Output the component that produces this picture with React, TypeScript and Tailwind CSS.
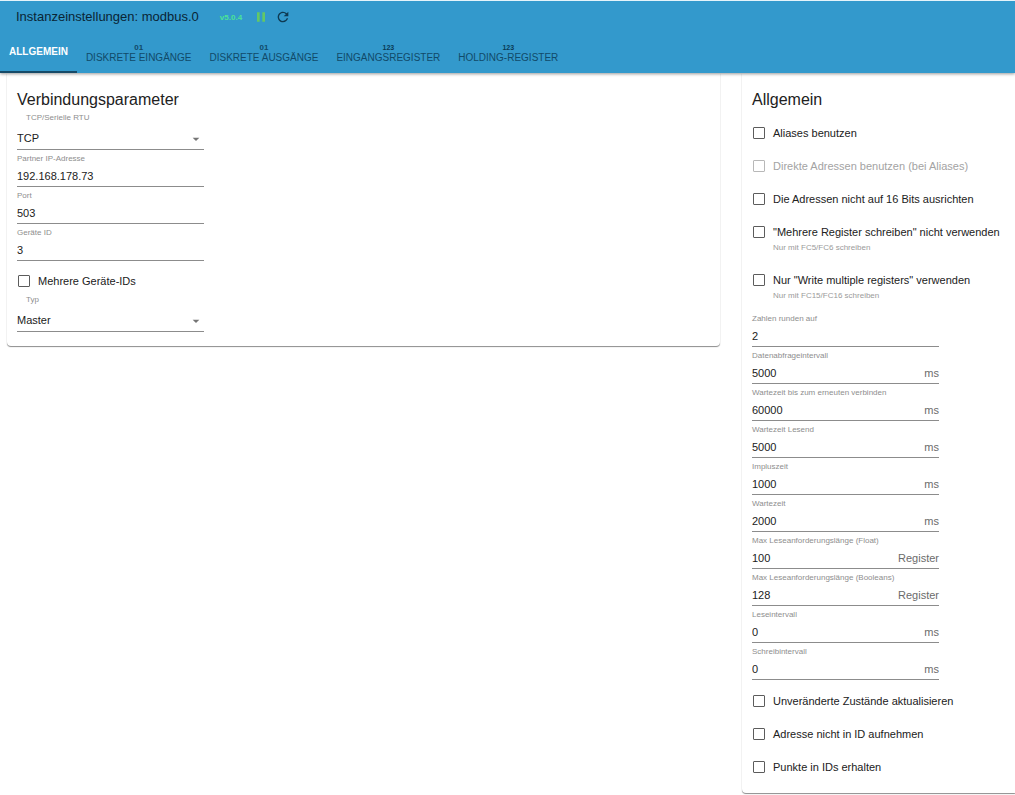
import { useId, useState } from "react";
import { MdArrowDropDown, MdPause, MdRefresh } from "react-icons/md";

const TABS = [
  { label: "Allgemein" },
  { label: "Diskrete Eingänge", icon: "01" },
  { label: "Diskrete Ausgänge", icon: "01" },
  { label: "Eingangsregister", icon: "123" },
  { label: "Holding-Register", icon: "123" },
];

const NUMBER_FIELDS = [
  { label: "Zahlen runden auf", value: "2" },
  { label: "Datenabfrageintervall", value: "5000", unit: "ms" },
  { label: "Wartezeit bis zum erneuten verbinden", value: "60000", unit: "ms" },
  { label: "Wartezeit Lesend", value: "5000", unit: "ms" },
  { label: "Impluszeit", value: "1000", unit: "ms" },
  { label: "Wartezeit", value: "2000", unit: "ms" },
  { label: "Max Leseanforderungslänge (Float)", value: "100", unit: "Register" },
  { label: "Max Leseanforderungslänge (Booleans)", value: "128", unit: "Register" },
  { label: "Leseintervall", value: "0", unit: "ms" },
  { label: "Schreibintervall", value: "0", unit: "ms" },
];

function TextField({ label, value, unit }: { label: string; value: string; unit?: string }) {
  const id = useId();
  return (
    <div className="w-[187px] pt-[3px]">
      <label htmlFor={id} className="block text-[8px] leading-3 text-[#8e8e8e]">
        {label}
      </label>
      <div className="flex items-center border-b border-[#8c8c8c]">
        <input
          id={id}
          defaultValue={value}
          className="h-[21px] min-w-0 flex-1 bg-transparent text-[11px] text-[#212121] outline-none"
        />
        {unit && <span className="pt-0.5 text-[11px] text-[#6b6b6b]">{unit}</span>}
      </div>
    </div>
  );
}

function SelectField({ label, options }: { label: string; options: string[] }) {
  const id = useId();
  return (
    <div className="w-[187px]">
      <label htmlFor={id} className="block pl-[9px] text-[8px] leading-3 text-[#8e8e8e]">
        {label}
      </label>
      <div className="relative mt-1 border-b border-[#8c8c8c]">
        <select
          id={id}
          className="block h-[21px] w-full appearance-none bg-transparent text-[11px] text-[#212121] outline-none"
        >
          {options.map((o) => (
            <option key={o}>{o}</option>
          ))}
        </select>
        <MdArrowDropDown className="pointer-events-none absolute top-[3px] right-0 size-4 text-[#757575]" />
      </div>
    </div>
  );
}

function Checkbox({ label, help, disabled }: { label: string; help?: string; disabled?: boolean }) {
  return (
    <div>
      <label
        className={
          disabled
            ? "flex h-5 items-center gap-2 pl-px text-[11px] text-[#a3a3a3]"
            : "flex h-5 items-center gap-2 pl-px text-[11px] text-[#212121]"
        }
      >
        <input
          type="checkbox"
          disabled={disabled}
          className="size-3 shrink-0 appearance-none rounded-[1px] border border-[#5c5c5c] checked:bg-[#3399cc] disabled:border-[#b8b8b8]"
        />
        {label}
      </label>
      {help && <p className="h-[15px] pl-[21px] text-[8px] leading-3 text-[#9a9a9a]">{help}</p>}
    </div>
  );
}

export default function App() {
  const [active, setActive] = useState(0);
  return (
    <div className="bg-white pb-0.5 font-['Liberation_Sans',Arial,sans-serif]">
      <header className="relative border-t border-[#e4f3fa] bg-[#3399cc] shadow-[0_1px_3px_rgba(0,0,0,0.4)]">
        <div className="flex h-8 items-center pl-4">
          <h1 className="text-[13px] text-[#0a2535]">Instanzeinstellungen: modbus.0</h1>
          <span className="ml-[21px] pt-0.5 text-[8px] font-bold text-[#4be396]">v5.0.4</span>
          <button type="button" aria-label="Pause" className="ml-[11px] text-[#64c864]">
            <MdPause className="size-4" />
          </button>
          <button type="button" aria-label="Neu laden" className="ml-1.5 text-[#0f3a52]">
            <MdRefresh className="size-4" />
          </button>
        </div>
        <nav role="tablist" className="flex h-10">
          {TABS.map((tab, i) => (
            <button
              key={tab.label}
              type="button"
              role="tab"
              aria-selected={i === active}
              onClick={() => setActive(i)}
              className={
                i === active
                  ? "flex flex-col items-center justify-center border-b-2 border-[#164a68] px-[9px] text-[10px] leading-3 font-bold text-white uppercase"
                  : "flex flex-col items-center justify-center border-b-2 border-transparent px-[9px] pt-[3px] text-[10px] leading-3 text-[#114a69] uppercase"
              }
            >
              {tab.icon && (
                <span
                  className={
                    tab.icon === "01"
                      ? "text-[8px] leading-2 font-bold"
                      : "text-[7px] leading-2 font-bold text-[#0a3a55]"
                  }
                >
                  {tab.icon}
                </span>
              )}
              {tab.label}
            </button>
          ))}
        </nav>
      </header>

      <main className="grid grid-cols-[minmax(0,1fr)_273px] items-start gap-[22px] pl-[7px]">
        <section className="rounded-b px-2.5 pt-[15px] pb-3.5 shadow-[0_1px_1px_rgba(0,0,0,0.45),0_0_1px_rgba(0,0,0,0.08)]">
          <h2 className="text-base leading-6 text-[#212121]">Verbindungsparameter</h2>
          <SelectField label="TCP/Serielle RTU" options={["TCP", "Serielle RTU"]} />
          <TextField label="Partner IP-Adresse" value="192.168.178.73" />
          <TextField label="Port" value="503" />
          <TextField label="Geräte ID" value="3" />
          <div className="pt-2.5 pb-[3px]">
            <Checkbox label="Mehrere Geräte-IDs" />
          </div>
          <SelectField label="Typ" options={["Master", "Slave"]} />
        </section>

        <section className="rounded-bl px-2.5 pt-[15px] pb-4 shadow-[0_1px_1px_rgba(0,0,0,0.45),0_0_1px_rgba(0,0,0,0.08)]">
          <h2 className="text-base leading-6 text-[#212121]">Allgemein</h2>
          <div className="flex flex-col gap-[13px] pt-[11px]">
            <Checkbox label="Aliases benutzen" />
            <Checkbox label="Direkte Adressen benutzen (bei Aliases)" disabled />
            <Checkbox label="Die Adressen nicht auf 16 Bits ausrichten" />
            <Checkbox
              label={'"Mehrere Register schreiben" nicht verwenden'}
              help="Nur mit FC5/FC6 schreiben"
            />
            <Checkbox
              label={'Nur "Write multiple registers" verwenden'}
              help="Nur mit FC15/FC16 schreiben"
            />
          </div>
          <div className="pt-[5px]">
            {NUMBER_FIELDS.map((f) => (
              <TextField key={f.label} {...f} />
            ))}
          </div>
          <div className="flex flex-col gap-[13px] pt-[11px]">
            <Checkbox label="Unveränderte Zustände aktualisieren" />
            <Checkbox label="Adresse nicht in ID aufnehmen" />
            <Checkbox label="Punkte in IDs erhalten" />
          </div>
        </section>
      </main>
    </div>
  );
}
